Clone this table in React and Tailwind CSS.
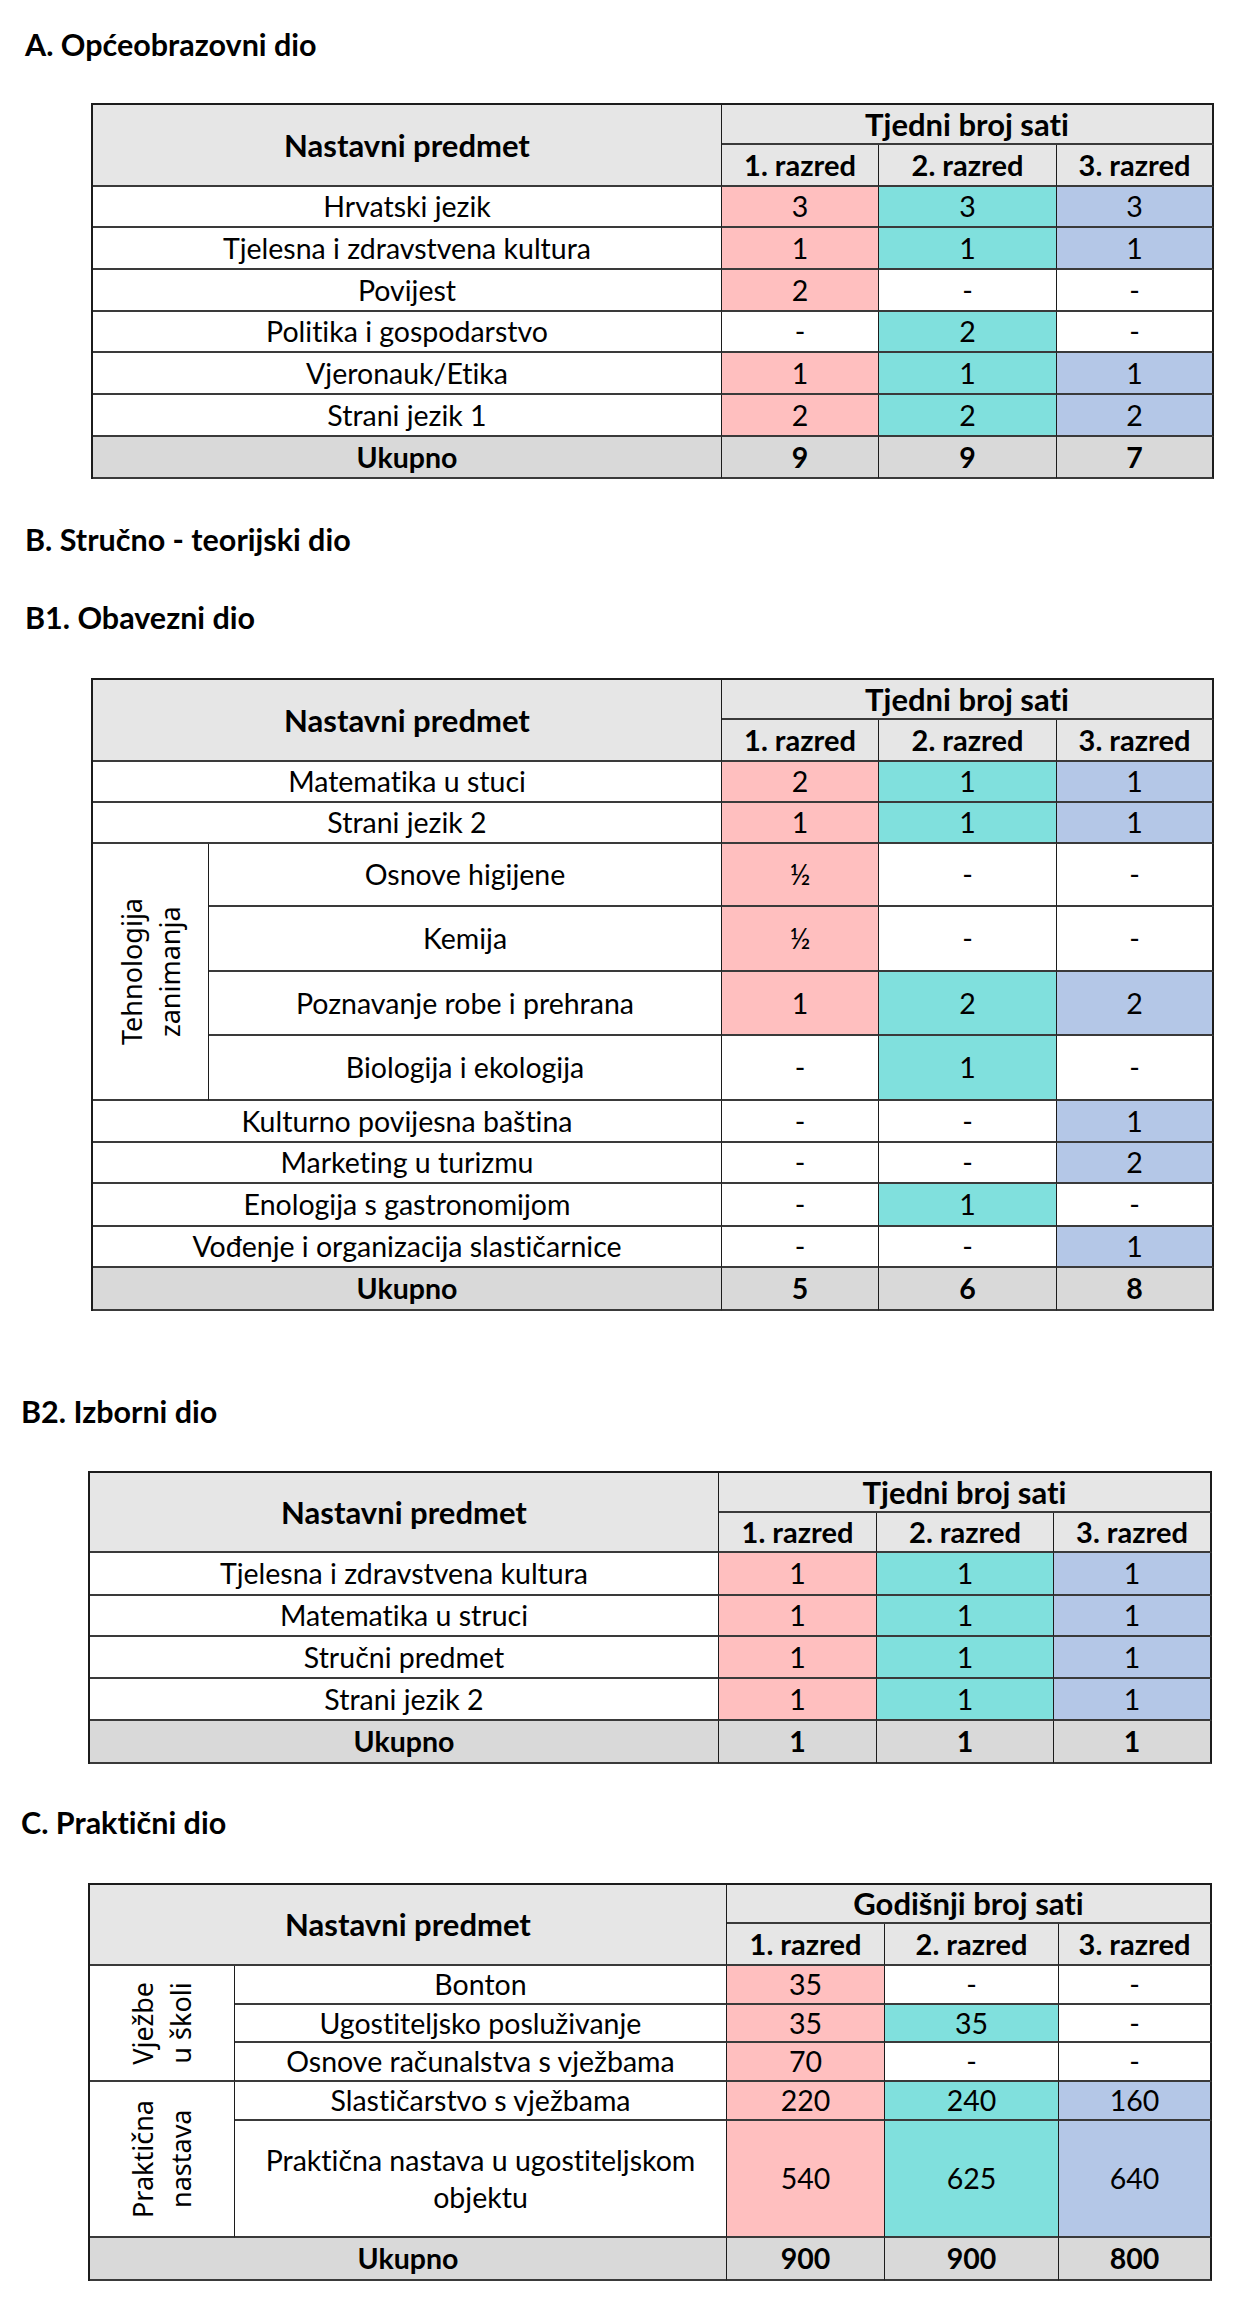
import React from "react";

const FILL = ["bg-[#ffbfbf]", "bg-[#80e0dd]", "bg-[#b4c7e7]"];

const Cell = ({ children, className = "" }) => (
  <div
    className={`flex items-center justify-center text-center border-r border-b-2 border-r-[#1c1c1c] border-b-[#3a3a3a] ${className}`}
  >
    {children}
  </div>
);

const Values = ({ values, total }) =>
  values.map((v, i) => (
    <Cell
      key={i}
      className={`${i === 2 ? "border-r-2" : ""} ${
        total ? "font-bold bg-[#d9d9d9]" : v === "-" ? "bg-white" : FILL[i]
      }`}
    >
      {v}
    </Cell>
  ));

const Header = ({ label, span = "" }) => (
  <>
    <Cell className={`row-span-2 bg-[#e6e6e6] font-bold text-[31px] ${span}`}>Nastavni predmet</Cell>
    <Cell className="col-span-3 border-r-2 bg-[#e6e6e6] font-bold text-[31px]">{label}</Cell>
    <Cell className="bg-[#e6e6e6] font-bold text-[29px]">1. razred</Cell>
    <Cell className="bg-[#e6e6e6] font-bold text-[29px]">2. razred</Cell>
    <Cell className="border-r-2 bg-[#e6e6e6] font-bold text-[29px]">3. razred</Cell>
  </>
);

const SideLabel = ({ lines, className }) => (
  <Cell className={className}>
    <span className="[writing-mode:vertical-rl] rotate-180 font-['Noto_Sans',sans-serif] text-[27px] leading-[38px]">
      {lines.map((l) => (
        <span key={l} className="block">
          {l}
        </span>
      ))}
    </span>
  </Cell>
);

const Title = ({ children, className = "" }) => (
  <h2 className={`text-[30.5px] font-bold leading-[36px] text-black ${className}`}>{children}</h2>
);

const tableA = [
  ["Hrvatski jezik", "3", "3", "3"],
  ["Tjelesna i zdravstvena kultura", "1", "1", "1"],
  ["Povijest", "2", "-", "-"],
  ["Politika i gospodarstvo", "-", "2", "-"],
  ["Vjeronauk/Etika", "1", "1", "1"],
  ["Strani jezik 1", "2", "2", "2"],
];

const b1Tech = [
  ["Osnove higijene", "½", "-", "-"],
  ["Kemija", "½", "-", "-"],
  ["Poznavanje robe i prehrana", "1", "2", "2"],
  ["Biologija i ekologija", "-", "1", "-"],
];

const b1Rest = [
  ["Kulturno povijesna baština", "-", "-", "1"],
  ["Marketing u turizmu", "-", "-", "2"],
  ["Enologija s gastronomijom", "-", "1", "-"],
  ["Vođenje i organizacija slastičarnice", "-", "-", "1"],
];

const tableB2 = [
  ["Tjelesna i zdravstvena kultura", "1", "1", "1"],
  ["Matematika u struci", "1", "1", "1"],
  ["Stručni predmet", "1", "1", "1"],
  ["Strani jezik 2", "1", "1", "1"],
];

export default function App() {
  return (
    <div className="w-[1248px] bg-white pt-[26px] pb-[34px] font-['Lato',sans-serif] text-[28.5px] text-black [font-variant-ligatures:none]">
      <Title className="pl-[25px]">A. Općeobrazovni dio</Title>
      <div className="ml-[91px] mt-[41px] grid w-[1123px] grid-cols-[629px_157px_178px_157px] grid-rows-[40px_42px_41px_42px_42px_41px_42px_42px_42px] border-t-2 border-l-2 border-[#1c1c1c]">
        <Header label="Tjedni broj sati" />
        {tableA.map(([name, ...v]) => (
          <React.Fragment key={name}>
            <Cell>{name}</Cell>
            <Values values={v} />
          </React.Fragment>
        ))}
        <Cell className="bg-[#d9d9d9] font-bold border-b-[#1c1c1c]">Ukupno</Cell>
        <Values values={["9", "9", "7"]} total />
      </div>

      <Title className="pl-[25px] mt-[42px]">B. Stručno - teorijski dio</Title>
      <Title className="pl-[25px] mt-[42px]">B1. Obavezni dio</Title>
      <div className="ml-[91px] mt-[43px] grid w-[1123px] grid-cols-[116px_513px_157px_178px_157px] grid-rows-[40px_42px_41px_41px_63px_65px_64px_65px_42px_41px_43px_41px_43px] border-t-2 border-l-2 border-[#1c1c1c]">
        <Header label="Tjedni broj sati" span="col-span-2" />
        <Cell className="col-span-2">Matematika u stuci</Cell>
        <Values values={["2", "1", "1"]} />
        <Cell className="col-span-2">Strani jezik 2</Cell>
        <Values values={["1", "1", "1"]} />
        <SideLabel lines={["Tehnologija", "zanimanja"]} className="row-span-4" />
        {b1Tech.map(([name, ...v]) => (
          <React.Fragment key={name}>
            <Cell>{name}</Cell>
            <Values values={v} />
          </React.Fragment>
        ))}
        {b1Rest.map(([name, ...v]) => (
          <React.Fragment key={name}>
            <Cell className="col-span-2">{name}</Cell>
            <Values values={v} />
          </React.Fragment>
        ))}
        <Cell className="col-span-2 bg-[#d9d9d9] font-bold">Ukupno</Cell>
        <Values values={["5", "6", "8"]} total />
      </div>

      <Title className="pl-[21px] mt-[82px]">B2. Izborni dio</Title>
      <div className="ml-[88px] mt-[42px] grid w-[1124px] grid-cols-[629px_158px_177px_158px] grid-rows-[40px_40px_43px_41px_42px_42px_43px] border-t-2 border-l-2 border-[#1c1c1c]">
        <Header label="Tjedni broj sati" />
        {tableB2.map(([name, ...v]) => (
          <React.Fragment key={name}>
            <Cell>{name}</Cell>
            <Values values={v} />
          </React.Fragment>
        ))}
        <Cell className="bg-[#d9d9d9] font-bold">Ukupno</Cell>
        <Values values={["1", "1", "1"]} total />
      </div>

      <Title className="pl-[21px] mt-[40px]">C. Praktični dio</Title>
      <div className="ml-[88px] mt-[43px] grid w-[1124px] grid-cols-[145px_492px_158px_174px_153px] grid-rows-[39px_42px_39px_38px_39px_39px_117px_43px] border-t-2 border-l-2 border-[#1c1c1c]">
        <Header label="Godišnji broj sati" span="col-span-2" />
        <SideLabel lines={["Vježbe", "u školi"]} className="row-span-3" />
        <Cell>Bonton</Cell>
        <Values values={["35", "-", "-"]} />
        <Cell>Ugostiteljsko posluživanje</Cell>
        <Values values={["35", "35", "-"]} />
        <Cell>Osnove računalstva s vježbama</Cell>
        <Values values={["70", "-", "-"]} />
        <SideLabel lines={["Praktična", "nastava"]} className="row-span-2" />
        <Cell>Slastičarstvo s vježbama</Cell>
        <Values values={["220", "240", "160"]} />
        <Cell className="leading-[37px] px-4">Praktična nastava u ugostiteljskom objektu</Cell>
        <Values values={["540", "625", "640"]} />
        <Cell className="col-span-2 bg-[#d9d9d9] font-bold">Ukupno</Cell>
        <Values values={["900", "900", "800"]} total />
      </div>
    </div>
  );
}
